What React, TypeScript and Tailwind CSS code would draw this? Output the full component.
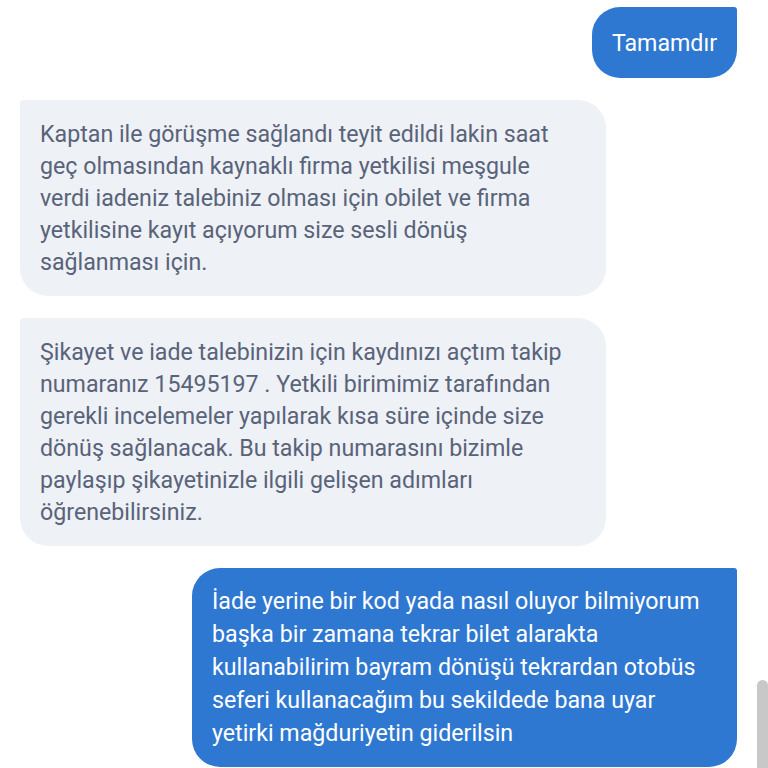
const incoming1 = [
  'Kaptan ile görüşme sağlandı teyit edildi lakin saat',
  'geç olmasından kaynaklı firma yetkilisi meşgule',
  'verdi iadeniz talebiniz olması için obilet ve firma',
  'yetkilisine kayıt açıyorum size sesli dönüş',
  'sağlanması için.',
];

const incoming2 = [
  'Şikayet ve iade talebinizin için kaydınızı açtım takip',
  'numaranız 15495197 . Yetkili birimimiz tarafından',
  'gerekli incelemeler yapılarak kısa süre içinde size',
  'dönüş sağlanacak. Bu takip numarasını bizimle',
  'paylaşıp şikayetinizle ilgili gelişen adımları',
  'öğrenebilirsiniz.',
];

const outgoing2 = [
  'İade yerine bir kod yada nasıl oluyor bilmiyorum',
  'başka bir zamana tekrar bilet alarakta',
  'kullanabilirim bayram dönüşü tekrardan otobüs',
  'seferi kullanacağım bu sekildede bana uyar',
  'yetirki mağduriyetin giderilsin',
];

function Lines({ lines }: { lines: string[] }) {
  return (
    <>
      {lines.map((l, i) => (
        <div key={i} className="whitespace-nowrap">
          {l}
        </div>
      ))}
    </>
  );
}

function Incoming({ lines }: { lines: string[] }) {
  return (
    <div className="self-start w-[586px] rounded-[28px] rounded-tl-[4px] bg-[#eef1f6] px-5 py-[18px] text-[#596379]">
      <Lines lines={lines} />
    </div>
  );
}

function Outgoing({ lines }: { lines: string[] }) {
  return (
    <div className="self-end w-[545px] rounded-[28px] rounded-tr-[3px] bg-[#2f78d2] px-5 py-[17px] leading-[33px] text-white">
      <Lines lines={lines} />
    </div>
  );
}

export default function App() {
  return (
    <div
      className="relative h-[768px] w-[768px] overflow-hidden bg-white text-[23.2px] leading-[32px]"
      style={{ fontFamily: 'Roboto, "Noto Sans", sans-serif' }}
    >
      <div className="flex flex-col gap-[22px] pl-5 pr-[31px] pt-[7px]">
        <div className="self-end rounded-[28px] rounded-tr-[3px] bg-[#2f78d2] px-5 py-[19.5px] text-white">
          Tamamdır
        </div>
        <Incoming lines={incoming1} />
        <Incoming lines={incoming2} />
        <Outgoing lines={outgoing2} />
      </div>
      <div className="absolute right-0 top-[680px] h-[100px] w-[11px] rounded-t-[6px] bg-[#c8c8c8]" />
    </div>
  );
}
